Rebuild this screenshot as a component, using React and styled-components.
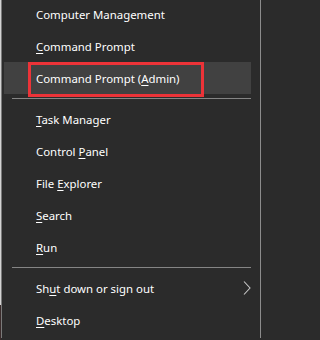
import styled, { createGlobalStyle } from "styled-components"

const GlobalStyle = createGlobalStyle`
  body {
    margin: 0;
    background: #2b2b2b;
    overflow: hidden;
  }
`

const items = [
  { label: "Computer Management" },
  { label: "Command Prompt", key: 0 },
  { label: "Command Prompt (Admin)", key: 16, active: true, marked: true },
  "sep",
  { label: "Task Manager", key: 0 },
  { label: "Control Panel", key: 8 },
  { label: "File Explorer", key: 5 },
  { label: "Search", key: 0 },
  { label: "Run", key: 0 },
  "sep",
  { label: "Shut down or sign out", key: 2, sub: true },
  { label: "Desktop", key: 0 },
]

function Label({ text, at }) {
  if (at === undefined) return <Text>{text}</Text>
  return (
    <Text>
      {text.slice(0, at)}
      <u>{text[at]}</u>
      {text.slice(at + 1)}
    </Text>
  )
}

function App() {
  return (
    <>
      <GlobalStyle />
      <Page>
        <Menu>
          {items.map((it, i) =>
            it === "sep" ? (
              <Separator key={i} />
            ) : (
              <Item key={i} $active={it.active}>
                <Label text={it.label} at={it.key} />
                {it.sub && (
                  <Chevron width="8" height="14" viewBox="0 0 8 14">
                    <path d="M1 0.5 L7 7 L1 13.5" fill="none" stroke="#c9c9c9" strokeWidth="1.1" />
                  </Chevron>
                )}
                {it.marked && <RedMark />}
              </Item>
            )
          )}
        </Menu>
      </Page>
    </>
  )
}

const Page = styled.div`
  display: flex;
  height: 340px;
  padding-left: 1px;
  background: linear-gradient(#d4d4d4 0, #d4d4d4 305px, #3a2b2b 305px);
  background-size: 1px 100%;
  background-repeat: no-repeat;
`

const Menu = styled.div`
  width: 247px;
  height: 340px;
  box-sizing: content-box;
  margin-top: -2px;
  padding: 0 9px 0 2px;
  background: #2b2b2b;
  border-left: 1px solid #7a7a7a;
  border-right: 1px solid #8c8c8c;
  font-family: "Noto Sans", "Open Sans", sans-serif;
  font-size: 11.4px;
  color: #ffffff;
`

const Item = styled.div`
  position: relative;
  display: flex;
  align-items: center;
  height: 32px;
  padding-left: 32px;
  background: ${(p) => (p.$active ? "#414141" : "transparent")};
  white-space: pre;
`

const Text = styled.span`
  u {
    text-decoration-thickness: 1px;
    text-underline-offset: 2px;
  }
`

const Separator = styled.div`
  height: 9px;
  display: flex;
  align-items: center;
  padding-left: 8px;

  &::after {
    content: "";
    flex: 1;
    height: 1px;
    background: #858585;
  }
`

const Chevron = styled.svg`
  margin-left: auto;
  display: block;
`

const RedMark = styled.div`
  position: absolute;
  left: 24px;
  top: 0;
  width: 170px;
  height: 29px;
  border: 3px solid #ec3338;
  z-index: 1;
`

export default App
